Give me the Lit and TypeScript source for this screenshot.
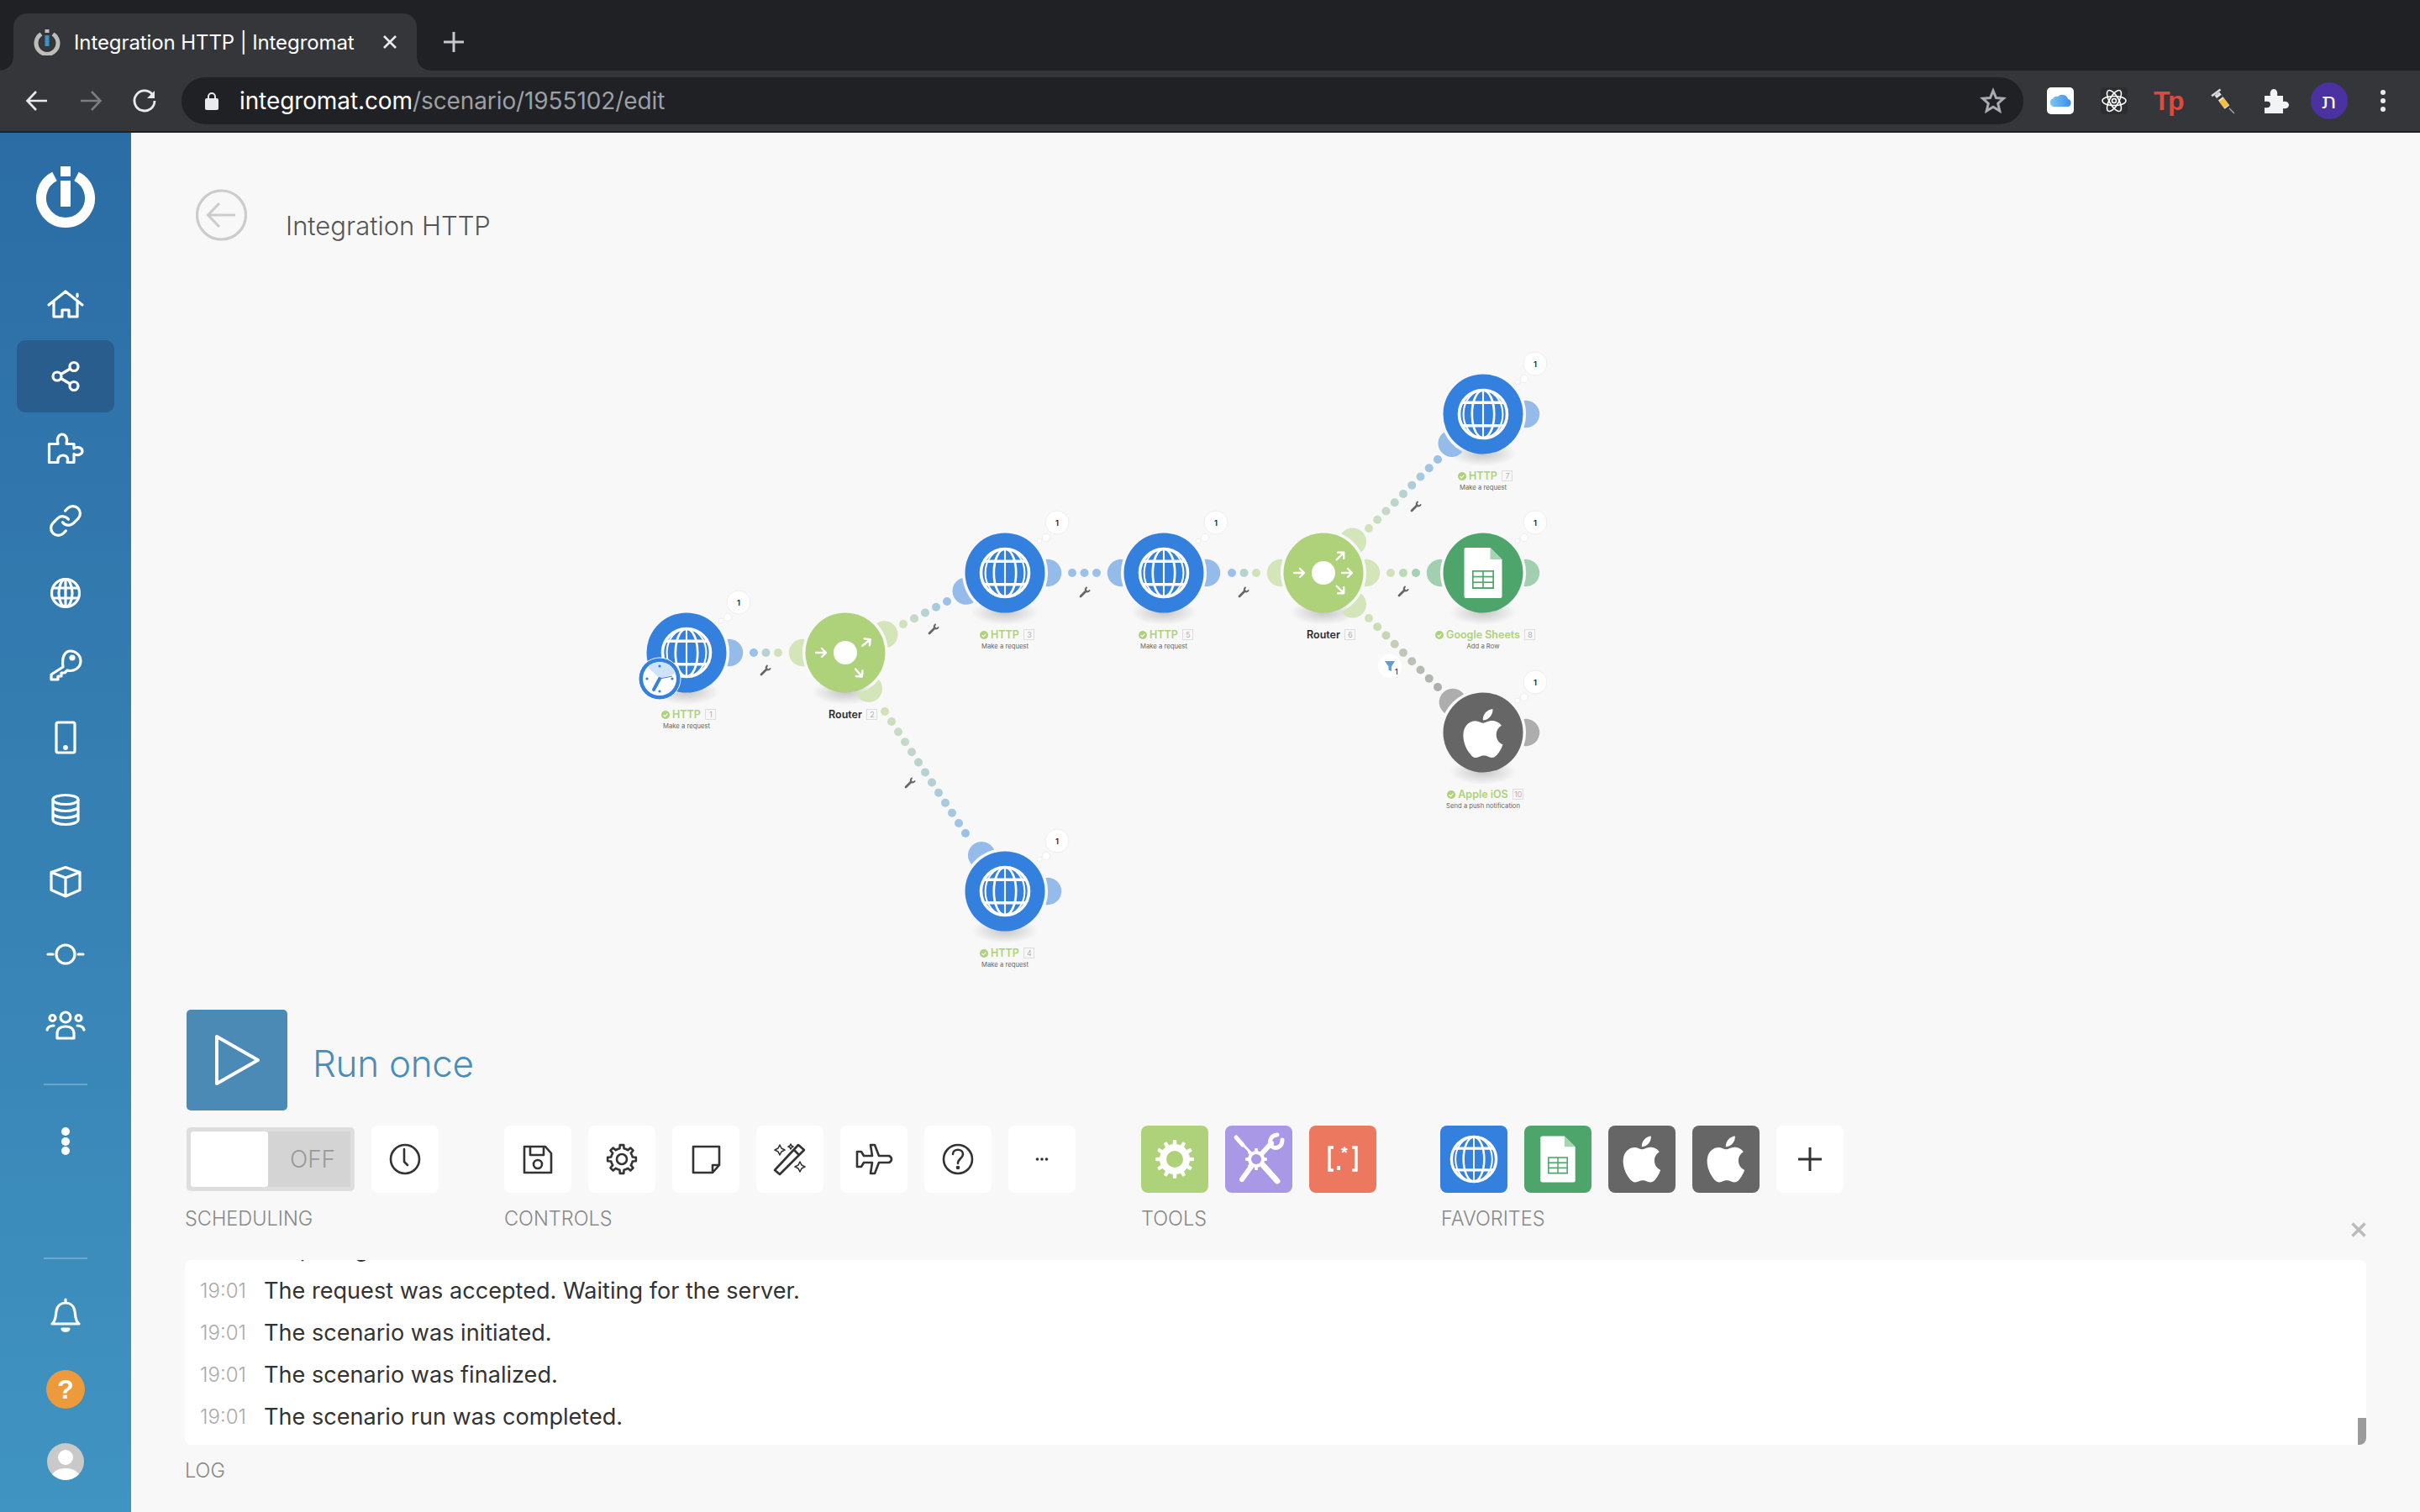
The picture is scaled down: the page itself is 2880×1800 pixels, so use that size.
import { LitElement, html, css, svg } from "lit";
import { customElement } from "lit/decorators.js";

const OX = 220;
const OY = 300;
const BLUE = "#3480df";
const GREEN = "#aed27a";
const SHEET = "#4da56b";
const GRAY = "#666666";
const APPLE = "M18.71 19.5c-.83 1.24-1.71 2.45-3.05 2.47-1.34.03-1.77-.79-3.29-.79-1.53 0-2 .77-3.27.82-1.31.05-2.3-1.32-3.14-2.53C4.25 17 2.94 12.45 4.7 9.39c.87-1.52 2.43-2.48 4.12-2.51 1.28-.02 2.5.87 3.29.87.78 0 2.26-1.07 3.81-.91.65.03 2.47.26 3.64 1.98-.09.06-2.17 1.28-2.15 3.81.03 3.02 2.65 4.03 2.68 4.04-.03.07-.42 1.44-1.38 2.83M13 3.5c.73-.83 1.94-1.46 2.94-1.5.13 1.17-.34 2.35-1.04 3.19-.69.85-1.83 1.51-2.95 1.42-.15-1.15.41-2.35 1.05-3.11z";

function hex(c: string) {
  return [1, 3, 5].map((i) => parseInt(c.slice(i, i + 2), 16));
}
function mix(a: string, b: string, t: number) {
  const p = hex(a), q = hex(b);
  return `rgb(${p.map((v, i) => Math.round(v + (q[i] - v) * t)).join(",")})`;
}
function gearPath(cx: number, cy: number, ro: number, ri: number, teeth: number) {
  const pts: string[] = [];
  const step = (Math.PI * 2) / teeth;
  for (let i = 0; i < teeth; i++) {
    const a = i * step;
    const seq: [number, number][] = [
      [ri, a - step * 0.5],
      [ri, a - step * 0.25],
      [ro, a - step * 0.17],
      [ro, a + step * 0.17],
      [ri, a + step * 0.25],
    ];
    for (const [r, t] of seq) pts.push(`${(cx + r * Math.cos(t)).toFixed(2)},${(cy + r * Math.sin(t)).toFixed(2)}`);
  }
  return "M" + pts.join("L") + "Z";
}
function globe(cx: number, cy: number, r: number) {
  const w = r * 0.1;
  return svg`<g fill="none" stroke="#fff" stroke-width=${w + 0.6}>
    <circle cx=${cx} cy=${cy} r=${r - w / 2}></circle>
    <ellipse cx=${cx} cy=${cy} rx=${r * 0.44} ry=${r - w / 2} stroke-width=${w * 0.9}></ellipse>
    <line x1=${cx} x2=${cx} y1=${cy - r} y2=${cy + r} stroke-width=${w * 0.7}></line>
    <ellipse cx=${cx} cy=${cy} rx=${r * 0.78} ry=${r - w / 2} stroke-width=${w * 0.7}></ellipse>
    <line x1=${cx - r * 0.86} x2=${cx + r * 0.86} y1=${cy - r * 0.46} y2=${cy - r * 0.46}></line>
    <line x1=${cx - r * 0.86} x2=${cx + r * 0.86} y1=${cy + r * 0.46} y2=${cy + r * 0.46}></line>
  </g>`;
}
function sheets(cx: number, cy: number, bg: string, sc = 1) {
  const w = 45 * sc, h = 60 * sc, x = cx - w / 2, y = cy - h / 2, f = 14 * sc;
  const tw = 26 * sc, th = 22 * sc, tx = cx - tw / 2, ty = y + 27 * sc;
  const cells = [];
  const cw = (tw - 5 * sc) / 2, ch = (th - 7 * sc) / 3;
  for (let r = 0; r < 3; r++) for (let c = 0; c < 2; c++)
    cells.push(svg`<rect x=${tx + 1.7 * sc + c * (cw + 1.6 * sc)} y=${ty + 1.7 * sc + r * (ch + 1.7 * sc)} width=${cw} height=${ch} fill="#fff"></rect>`);
  return svg`<path d="M${x + 2} ${y}H${x + w - f}L${x + w} ${y + f}V${y + h - 2}a2 2 0 0 1-2 2H${x + 2}a2 2 0 0 1-2-2V${y + 2}a2 2 0 0 1 2-2Z" fill="#fff"></path>
    <path d="M${x + w - f} ${y}L${x + w} ${y + f}H${x + w - f}Z" fill="#a5d3b4"></path>
    <rect x=${tx} y=${ty} width=${tw} height=${th} fill=${bg}></rect>${cells}`;
}
function apple(cx: number, cy: number, s: number) {
  return svg`<path transform="translate(${cx - 12 * s} ${cy - 12 * s}) scale(${s})" d=${APPLE} fill="#fff"></path>`;
}
function arrow(x: number, y: number, deg: number) {
  return svg`<g transform="translate(${x} ${y}) rotate(${deg})" fill="none" stroke="#fff" stroke-width="2.4" stroke-linecap="round" stroke-linejoin="round"><path d="M-6 0H6M1 -5L6 0L1 5"></path></g>`;
}
function wrench(x: number, y: number) {
  return svg`<g transform="translate(${x} ${y})" fill="none" stroke="#666" stroke-linecap="round"><path d="M-5 5L1.5 -1.5" stroke-width="2.8"></path><path d="M2 -5.5A3.6 3.6 0 0 0 1.5 -0.8A3.6 3.6 0 0 0 5.6 -2" stroke-width="1.9"></path></g>`;
}
function port(cx: number, cy: number, deg: number, color: string) {
  return svg`<path transform="translate(${cx} ${cy}) rotate(${deg})" d="M48.5 -16A16.2 16.2 0 1 1 48.5 16A51 51 0 0 0 48.5 -16Z" fill=${color}></path>`;
}

type N = { id: number; x: number; y: number; kind: string; name: string; sub: string; ports: [number, string][] };
const PB = "#94bbea", PG = "#d3e5b9", PS = "#a1cfb0", PA = "#adadad";
const nodes: N[] = [
  { id: 1, x: 817, y: 777, kind: "http", name: "HTTP", sub: "Make a request", ports: [[0, PB]] },
  { id: 2, x: 1006, y: 777, kind: "router2", name: "Router", sub: "", ports: [[180, PG], [-25, PG], [57, PG]] },
  { id: 3, x: 1196, y: 682, kind: "http", name: "HTTP", sub: "Make a request", ports: [[0, PB], [155, PB]] },
  { id: 4, x: 1196, y: 1061, kind: "http", name: "HTTP", sub: "Make a request", ports: [[0, PB], [237, PB]] },
  { id: 5, x: 1385, y: 682, kind: "http", name: "HTTP", sub: "Make a request", ports: [[0, PB], [180, PB]] },
  { id: 6, x: 1575, y: 682, kind: "router6", name: "Router", sub: "", ports: [[180, PG], [0, PG], [-47, PG], [47, PG]] },
  { id: 7, x: 1765, y: 493, kind: "http", name: "HTTP", sub: "Make a request", ports: [[0, PB], [137, PB]] },
  { id: 8, x: 1765, y: 682, kind: "sheets", name: "Google Sheets", sub: "Add a Row", ports: [[0, PS], [180, PS]] },
  { id: 10, x: 1765, y: 872, kind: "apple", name: "Apple iOS", sub: "Send a push notification", ports: [[0, PA], [225, PA]] },
];
const links: [number, number, number, number, number, string, string][] = [
  [897, 777, 926, 777, 3, "#9cc1e8", "#cfe2ba"],
  [1075, 743, 1127, 716, 5, "#cfe2ba", "#9cc1e8"],
  [1053, 847, 1149, 992, 13, "#cfe2ba", "#9cc1e8"],
  [1276, 682, 1305, 682, 3, "#9cc1e8", "#9cc1e8"],
  [1466, 682, 1495, 682, 3, "#9cc1e8", "#cfe2ba"],
  [1629, 629, 1711, 547, 9, "#cfe2ba", "#9cc1e8"],
  [1655, 682, 1685, 682, 3, "#cfe2ba", "#a6d2b1"],
  [1629, 736, 1711, 818, 9, "#cfe2ba", "#aeaeae"],
];
const wrenches = [[911, 798], [1111, 749], [1083, 932], [1291, 705], [1480, 705], [1685, 603], [1670, 704]];

function nodeBody(n: N) {
  const { x, y } = n;
  const bg = n.kind === "http" ? BLUE : n.kind === "sheets" ? SHEET : n.kind === "apple" ? GRAY : GREEN;
  const isRouter = n.kind === "router2" || n.kind === "router6";
  let icon: unknown = null;
  if (n.kind === "http") icon = globe(x, y, 30);
  if (n.kind === "sheets") icon = sheets(x, y, SHEET);
  if (n.kind === "apple") icon = apple(x, y + 1, 2.9);
  if (isRouter) {
    const a = [arrow(x - 29, y, 0), arrow(x + 25, y - 12, -38), arrow(x + 16, y + 24, 50)];
    if (n.kind === "router6") {
      a[1] = arrow(x + 20, y - 20, -45);
      a[2] = arrow(x + 20, y + 20, 45);
      a.push(arrow(x + 28, y, 0));
    }
    icon = svg`<circle cx=${x} cy=${y} r="14" fill="#fff"></circle>${a}`;
  }
  return svg`<ellipse cx=${x} cy=${y + 47} rx="40" ry="15" fill="url(#shade)"></ellipse>
    ${n.ports.map(([d, c]) => port(x, y, d, c))}
    <circle cx=${x} cy=${y} r="47.5" fill=${bg}></circle>${icon}
    ${isRouter ? null : svg`<circle cx=${x + 41} cy=${y - 38} r="3" fill="#fff" stroke="#eee"></circle>
    <circle cx=${x + 49} cy=${y - 42} r="4.7" fill="#fff" stroke="#eee"></circle>
    <circle cx=${x + 62} cy=${y - 60} r="14" fill="#fff" stroke="#eee"></circle>
    <text x=${x + 62} y=${y - 56.5} text-anchor="middle" class="cnt">1</text>`}`;
}

const sideIcons = [
  svg`<path d="M4 25L24 9L44 25M38 15V12M10 21V39H20V31H28V39H38V21"></path>`,
  svg`<circle cx="14" cy="24" r="5"></circle><circle cx="34" cy="12.5" r="5"></circle><circle cx="34" cy="35.5" r="5"></circle><path d="M18.5 21.5L29.5 15M18.5 26.5L29.5 33"></path>`,
  svg`<path d="M4.5 18.5H15C13 12 16 7 20 7S27 12 25 18.5H34V24C38 21 44 23 44 27S38 33 34 30.5V40.5H26C28 35 25 32 21 32S14 35 15 40.5H4.5Z"></path>`,
  svg`<g transform="translate(3 3) scale(1.75)" stroke-width="1.85"><path d="M10 13a5 5 0 0 0 7.54.54l3-3a5 5 0 0 0-7.07-7.07l-1.72 1.71"></path><path d="M14 11a5 5 0 0 0-7.54-.54l-3 3a5 5 0 0 0 7.07 7.07l1.71-1.71"></path></g>`,
  svg`<circle cx="24" cy="24" r="16.5"></circle><ellipse cx="24" cy="24" rx="8" ry="16.5"></ellipse><path d="M9 18H39M9 30H39M24 8V40"></path>`,
  svg`<path d="M21 26L7 35V41H15V37H19V33H23L26 30C34 32 42 27 42 19C42 12 36 7 30 7S19 13 21 26Z"></path><circle cx="32" cy="15" r="2" fill="#fff"></circle>`,
  svg`<rect x="13" y="6" width="22" height="36" rx="2"></rect><circle cx="24" cy="36" r="1.3" fill="#fff"></circle>`,
  svg`<ellipse cx="24" cy="12" rx="15" ry="5.5"></ellipse><path d="M9 12V36C9 39 16 41.5 24 41.5S39 39 39 36V12M9 20C9 23 16 25.5 24 25.5S39 23 39 20M9 28C9 31 16 33.5 24 33.5S39 31 39 28"></path>`,
  svg`<path d="M24 6.5L41 12.5V33.5L24 41L7 33.5V12.5ZM7 12.5L24 19L41 12.5M24 19V41"></path>`,
  svg`<circle cx="24" cy="24" r="11"></circle><path d="M3 24H9M39 24H45"></path>`,
  svg`<circle cx="24" cy="13" r="6"></circle><circle cx="8.5" cy="14" r="3.5"></circle><circle cx="39.5" cy="14" r="3.5"></circle><path d="M14 38V33C14 26 18 24 24 24S34 26 34 33V38ZM2 28C3 24 6 23 10 23M46 28C45 24 42 23 38 23"></path>`,
];
const ctl = [
  svg`<path d="M24 25H49L56 33V56H24ZM31 25V35H47V25"></path><circle cx="40" cy="46" r="5"></circle>`,
  svg`<path d=${gearPath(40, 40, 17, 13, 8)}></path><circle cx="40" cy="40" r="6"></circle>`,
  svg`<path d="M25 25H56V47L48 56H25ZM56 47H48V56"></path>`,
  svg`<path d="M28 58L22 53L50 23L57 29ZM45 29L51 35"></path><path d="M28 23L30 27L34 29L30 31L28 35L26 31L22 29L26 27ZM41 22L42 24L44 25L42 26L41 28L40 26L38 25L40 24ZM52 43L54 47L58 49L54 51L52 55L50 51L46 49L50 47Z" stroke-width="1.6"></path>`,
  svg`<path d="M36 23H41L46 36H58C62 38 62 42 58 44H46L41 57H36L38 44H28L25 49H20V31H25L28 36H38Z"></path>`,
  svg`<ellipse cx="40" cy="40" rx="17" ry="17"></ellipse><path d="M34 34C34 27 46 27 46 34C46 39 40 39 40 45"></path><circle cx="40" cy="50" r="1" fill="#333"></circle>`,
  svg`<circle cx="34.5" cy="40" r="1.8" fill="#333" stroke="none"></circle><circle cx="40" cy="40" r="1.8" fill="#333" stroke="none"></circle><circle cx="45.5" cy="40" r="1.8" fill="#333" stroke="none"></circle>`,
];

@customElement("app-root")
export class AppRoot extends LitElement {
  static styles = css`
    :host { display: block; width: 2880px; height: 1800px; overflow: hidden; font-family: Inter, "Liberation Sans", sans-serif; background: #f8f8f8; }
    .page { display: flex; flex-direction: column; height: 1800px; }
    .tabs { height: 84px; background: #202124; display: flex; align-items: flex-end; padding-left: 16px; flex: none; }
    .tab { position: relative; width: 480px; height: 68px; background: #35363a; border-radius: 16px 16px 0 0; display: flex; align-items: center; color: #fff; font-size: 24px; padding-left: 24px; box-sizing: border-box; }
    .tab::before, .tab::after { content: ""; position: absolute; bottom: 0; width: 16px; height: 16px; }
    .tab::before { left: -16px; background: radial-gradient(circle at 0 0, transparent 15.5px, #35363a 16px); }
    .tab::after { right: -16px; background: radial-gradient(circle at 100% 0, transparent 15.5px, #35363a 16px); }
    .tab .fav { width: 32px; height: 32px; margin-right: 16px; flex: none; }
    .tab .ttl { width: 366px; white-space: nowrap; letter-spacing: -0.1px; }
    .tab .cl { width: 20px; height: 20px; }
    .newtab { width: 28px; height: 28px; margin: 0 0 20px 30px; }
    .bar { height: 72px; background: #35363a; border-bottom: 2px solid #1f2023; display: flex; align-items: center; flex: none; padding-left: 12px; }
    .nav { width: 64px; height: 64px; display: flex; align-items: center; justify-content: center; flex: none; }
    .url { flex: 1; height: 56px; margin: 0 12px; background: #202124; border-radius: 28px; display: flex; align-items: center; padding: 0 20px 0 28px; font-size: 28px; color: #9aa0a6; }
    .url .lock { width: 16px; height: 24px; margin-right: 25px; }
    .url b { font-weight: 400; color: #fff; }
    .url .txt { flex: 1; letter-spacing: -0.1px; }
    .ext { width: 64px; height: 64px; display: flex; align-items: center; justify-content: center; flex: none; }
    .tp { font: 700 32px "Liberation Sans", sans-serif; color: #dd4b3e; letter-spacing: -2.5px; }
    .ava { width: 44px; height: 44px; border-radius: 50%; background: #4a32a0; color: #fff; font: 26px "DejaVu Sans", sans-serif; display: flex; align-items: center; justify-content: center; }
    .ext.last { margin-right: 12px; }
    .body { flex: 1; display: flex; min-height: 0; }
    .side { width: 156px; flex: none; background: linear-gradient(#2b6ca5, #4094c1); display: flex; flex-direction: column; align-items: center; color: #fff; }
    .logo { width: 76px; height: 76px; margin: 38px 0 47px; flex: none; }
    .si { width: 116px; height: 86px; flex: none; display: flex; align-items: center; justify-content: center; border-radius: 10px; }
    .si.on { background: #285d8e; }
    .si svg { width: 48px; height: 48px; fill: none; stroke: #fff; stroke-width: 3.2; stroke-linejoin: round; stroke-linecap: round; }
    .sep { width: 52px; height: 2px; background: rgba(255, 255, 255, 0.25); flex: none; }
    .sep.a { margin-top: 25px; }
    .dots { height: 205px; display: flex; flex-direction: column; gap: 1.5px; align-items: center; justify-content: flex-start; padding-top: 50px; box-sizing: border-box; flex: none; }
    .dots i { width: 10px; height: 10px; border-radius: 50%; background: #fff; }
    .bell { margin-top: 23px; }
    .help { width: 46px; height: 46px; border-radius: 50%; background: #ec9a3c; display: flex; align-items: center; justify-content: center; font: 700 32px "Liberation Sans", sans-serif; margin-top: 23px; flex: none; }
    .me { width: 44px; height: 44px; margin-top: 41px; flex: none; }
    .main { flex: 1; min-width: 0; display: flex; flex-direction: column; padding: 0 64px 35px 64px; }
    .head { height: 142px; flex: none; display: flex; padding: 67px 0 0 13px; box-sizing: border-box; align-items: flex-start; }
    .back { width: 61px; height: 62px; flex: none; }
    .title { margin: 24px 0 0 46px; font-size: 31px; line-height: 40px; font-weight: 300; color: #555; }
    .canvas { flex: 1; position: relative; min-height: 0; }
    .canvas > svg { position: absolute; inset: 0; width: 100%; height: 100%; overflow: visible; }
    .cnt { font: 600 9.5px Inter, sans-serif; fill: #222; }
    .fil { font: 500 9px Inter, sans-serif; fill: #333; }
    .lab { position: absolute; transform: translateX(-50%); text-align: center; white-space: nowrap; }
    .nm { position: relative; display: inline-block; font-size: 12.5px; line-height: 16px; font-weight: 600; color: #aed27a; }
    .nm.r { color: #2d2d2d; }
    .nm svg { position: absolute; right: 100%; top: 3px; margin-right: 3.5px; width: 10px; height: 10px; }
    .nm span { position: absolute; left: 100%; top: 1px; margin-left: 5.5px; width: 13px; height: 13px; box-sizing: border-box; border: 1px solid #ddd; font-size: 9px; line-height: 11px; font-weight: 300; color: #999; }
    .sb { font-size: 7.7px; line-height: 12px; color: #666; }
    .run { height: 120px; flex: none; display: flex; align-items: center; padding-left: 2px; }
    .runb { width: 120px; height: 120px; border-radius: 5px; background: #4a8ab5; flex: none; }
    .runb svg { display: block; }
    .runt { margin: 8px 0 0 30px; font-size: 44px; font-weight: 300; color: #4a8db8; letter-spacing: -0.3px; }
    .tools { margin-top: 18px; height: 133px; flex: none; display: grid; grid-template-columns: 380px 758px 356px 480px 1fr; }
    .g { display: flex; flex-direction: column; }
    .row { display: flex; gap: 20px; height: 80px; align-items: center; }
    .lbl { margin-top: 17px; font-size: 23.5px; line-height: 28px; font-weight: 300; color: #888; }
    .lbl.fv { margin-left: 1px; }
    .lbl.lg { margin-top: 17px; }
    .tile { width: 80px; height: 80px; border-radius: 8px; background: #fff; flex: none; }
    .tile svg { display: block; width: 80px; height: 80px; }
    .ol { fill: none; stroke: #333; stroke-width: 2.6; stroke-linejoin: round; stroke-linecap: round; }
    .tog { width: 200px; height: 76px; margin-left: 2px; box-sizing: border-box; border: 5px solid #dedede; border-radius: 5px; background: #d4d4d4; display: flex; align-items: center; }
    .tog i { width: 92px; height: 66px; background: #fff; border-radius: 3px; flex: none; }
    .tog span { flex: 1; text-align: center; font-size: 28px; font-weight: 300; color: #999; padding-left: 8px; }
    .x { justify-self: end; align-self: end; width: 18px; height: 18px; }
    .log { height: 220px; flex: none; margin-top: 27px; border-radius: 8px; background: #fff; display: flex; flex-direction: column; justify-content: flex-end; overflow: hidden; position: relative; padding-bottom: 9px; box-sizing: border-box; }
    .lr { height: 50px; flex: none; display: flex; align-items: center; color: #333; font-size: 27.1px; font-weight: 400; }
    .lr em { font-style: normal; width: 76px; margin-left: 18px; flex: none; color: #aaa; font-size: 24px; font-weight: 300; }
    .sc { position: absolute; right: 0; bottom: 0; width: 10px; height: 32px; background: #9b9b9b; }
    .green { background: #aed27a; } .purple { background: #a998e5; } .red { background: #ec7860; } .blue { background: #3480df; } .sheet { background: #4da56b; } .dark { background: #666; }
    .ast { font: 700 20px "Liberation Sans", sans-serif; fill: #fff; }
  `;

  render() {
    return html`<div class="page">
      <div class="tabs">
        <div class="tab">
          <svg class="fav" viewBox="0 0 32 32"><path d="M9 6.5A13 13 0 1 0 23 6.5" fill="none" stroke="#bdbdbd" stroke-width="5"></path><rect x="13.5" y="1" width="5" height="4" fill="#bdbdbd"></rect><rect x="13.5" y="8" width="5" height="13" fill="#3f8fc6"></rect></svg>
          <span class="ttl">Integration HTTP | Integromat</span>
          <svg class="cl" viewBox="0 0 20 20"><path d="M3 3L17 17M17 3L3 17" stroke="#e8eaed" stroke-width="2.6"></path></svg>
        </div>
        <svg class="newtab" viewBox="0 0 28 28"><path d="M14 2V26M2 14H26" stroke="#c4c7cc" stroke-width="3"></path></svg>
      </div>
      <div class="bar">
        <div class="nav"><svg width="30" height="30" viewBox="0 0 30 30" fill="none" stroke="#e8eaed" stroke-width="2.6"><path d="M27 15H4M14 4L3.5 15L14 26"></path></svg></div>
        <div class="nav"><svg width="30" height="30" viewBox="0 0 30 30" fill="none" stroke="#7b7d80" stroke-width="2.6"><path d="M3 15H26M16 4L26.5 15L16 26"></path></svg></div>
        <div class="nav"><svg width="30" height="30" viewBox="0 0 30 30" fill="none" stroke="#e8eaed" stroke-width="2.8"><path d="M24 7A12 12 0 1 0 27 15"></path><path d="M18 12H27V3" fill="#e8eaed" stroke="none"></path></svg></div>
        <div class="url">
          <svg class="lock" viewBox="0 0 16 24"><path d="M4 10V7A4 4 0 0 1 12 7V10" fill="none" stroke="#e8eaed" stroke-width="2"></path><rect y="9" width="16" height="14" rx="2" fill="#e8eaed"></rect></svg>
          <span class="txt"><b>integromat.com</b>/scenario/1955102/edit</span>
          <svg width="32" height="32" viewBox="0 0 32 32"><path d="M16 4L19.5 12.5L28.5 13.2L21.7 19.2L23.8 28L16 23.3L8.2 28L10.3 19.2L3.5 13.2L12.5 12.5Z" fill="none" stroke="#a8abaf" stroke-width="3" stroke-linejoin="miter"></path></svg>
        </div>
        <div class="ext"><svg width="32" height="32" viewBox="0 0 32 32"><defs><linearGradient id="ic" x1="0" y1="0" x2="1" y2="0"><stop offset="0" stop-color="#7cc8f0"></stop><stop offset="1" stop-color="#3a8ff0"></stop></linearGradient></defs><rect width="32" height="32" rx="5" fill="#fff"></rect><path d="M8 23A5 5 0 0 1 7 13.4A5 5 0 0 1 13 11A7 7 0 0 1 25 14A4.6 4.6 0 0 1 25 23Z" fill="url(#ic)"></path></svg></div>
        <div class="ext"><svg width="32" height="32" viewBox="0 0 32 32"><rect width="32" height="32" rx="4" fill="#2d2e32"></rect><g fill="none" stroke="#fff" stroke-width="1.6"><ellipse cx="16" cy="16" rx="14" ry="5.5"></ellipse><ellipse cx="16" cy="16" rx="14" ry="5.5" transform="rotate(60 16 16)"></ellipse><ellipse cx="16" cy="16" rx="14" ry="5.5" transform="rotate(120 16 16)"></ellipse><circle cx="16" cy="16" r="2.5"></circle></g></svg></div>
        <div class="ext"><span class="tp">Tp</span></div>
        <div class="ext"><svg width="32" height="32" viewBox="0 0 32 32"><path d="M25 25L31 31" stroke="#aaa" stroke-width="1.2"></path><g transform="rotate(-37 16 16)"><rect x="13" y="6" width="7" height="20" fill="#e6e6e6"></rect><rect x="13" y="15" width="7" height="10" fill="#f0c040"></rect><rect x="13" y="10" width="7" height="3" fill="#333"></rect><rect x="10" y="3" width="13" height="2.5" fill="#ddd"></rect><rect x="15" y="4" width="3" height="4" fill="#ccc"></rect></g></svg></div>
        <div class="ext"><svg width="32" height="32" viewBox="0 0 32 32"><path d="M3 10H10C9 5 11 2 14 2S19 5 18 10H25V17C29 16 32 18 32 21S29 26 25 25V31H3V24C8 25 10 23 10 20S7 16 3 17Z" fill="#f1f3f4"></path></svg></div>
        <div class="ext"><div class="ava">ת</div></div>
        <div class="ext last"><svg width="8" height="28" viewBox="0 0 8 28"><circle cx="4" cy="4" r="3" fill="#e8eaed"></circle><circle cx="4" cy="14" r="3" fill="#e8eaed"></circle><circle cx="4" cy="24" r="3" fill="#e8eaed"></circle></svg></div>
      </div>
      <div class="body">
        <nav class="side">
          <svg class="logo" viewBox="0 0 76 76"><path d="M25 14A29 29 0 1 0 51 14" fill="none" stroke="#fff" stroke-width="12"></path><rect x="32" y="2" width="12" height="12" fill="#fff"></rect><rect x="32" y="19" width="12" height="31" fill="#fff"></rect></svg>
          ${sideIcons.map((ic, i) => html`<div class="si ${i === 1 ? "on" : ""}"><svg viewBox="0 0 48 48">${ic}</svg></div>`)}
          <div class="sep a"></div>
          <div class="dots"><i></i><i></i><i></i></div>
          <div class="sep"></div>
          <div class="si bell"><svg viewBox="0 0 48 48"><path d="M8 35C13 31 12 25 13 20C14 13 19 10 24 10S34 13 35 20C36 25 35 31 40 35ZM24 6V10"></path><path d="M20 41H28C27 44 21 44 20 41Z" fill="#fff"></path></svg></div>
          <div class="help">?</div>
          <svg class="me" viewBox="0 0 44 44"><defs><clipPath id="av"><circle cx="22" cy="22" r="22"></circle></clipPath></defs><circle cx="22" cy="22" r="22" fill="#c9c9c9"></circle><g clip-path="url(#av)" fill="#fff"><circle cx="22" cy="17" r="9"></circle><ellipse cx="22" cy="41" rx="17" ry="11"></ellipse></g></svg>
        </nav>
        <main class="main">
          <div class="head">
            <svg class="back" viewBox="0 0 61 62" fill="none" stroke="#cccccc" stroke-width="3.2"><circle cx="30.5" cy="31" r="29"></circle><path d="M47 31H15M28 17L14.5 31L28 45"></path></svg>
            <div class="title">Integration HTTP</div>
          </div>
          <section class="canvas">
            <svg>
              <defs><radialGradient id="shade"><stop offset="0" stop-color="#000" stop-opacity=".2"></stop><stop offset="1" stop-color="#000" stop-opacity="0"></stop></radialGradient></defs>
              <g transform="translate(${-OX} ${-OY})">
                ${links.map(([x1, y1, x2, y2, n, c1, c2]) =>
                  Array.from({ length: n }, (_, i) => {
                    const t = i / (n - 1);
                    return svg`<circle cx=${x1 + (x2 - x1) * t} cy=${y1 + (y2 - y1) * t} r="5" fill=${mix(c1, c2, t)}></circle>`;
                  }))}
                ${wrenches.map(([x, y]) => wrench(x, y))}
                ${nodes.map(nodeBody)}
                <g transform="translate(785 808)">
                  <circle r="25" fill="#3480df" stroke="#f4f8fd" stroke-width="1"></circle>
                  <circle r="20" fill="#fff"></circle>
                  <path d="M0 0L-14 -14A20 20 0 0 1 19 -6Z" fill="#cfe3f8"></path>
                  <path d="M0 0L15 -3" stroke="#3480df" stroke-width="1"></path>
                  <path d="M0 0L-7 13" stroke="#3480df" stroke-width="4" stroke-linecap="round"></path>
                  <g fill="#3480df"><circle cy="-15" r="1.6"></circle><circle cy="15" r="1.6"></circle><circle cx="-15" r="1.6"></circle><circle cx="15" r="1.6"></circle></g>
                </g>
                <circle cx="1654" cy="793" r="14" fill="#fff"></circle>
                <path d="M1648 787H1660L1656 793.5V799L1652.5 797.5V793.5Z" fill="#5aa0dc"></path>
                <text x="1660" y="803" class="fil">1</text>
              </g>
            </svg>
            ${nodes.map((n) => html`<div class="lab" style="left:${n.x - OX}px;top:${n.y + 62 - OY}px">
              <div class="nm ${n.name === "Router" ? "r" : ""}">
                ${n.name === "Router" ? "" : html`<svg viewBox="0 0 10 10"><circle cx="5" cy="5" r="5" fill="#aed27a"></circle><path d="M2.6 5.2L4.4 6.9L7.4 3.6" fill="none" stroke="#fff" stroke-width="1.2"></path></svg>`}
                ${n.name}<span>${n.id}</span>
              </div>
              ${n.sub ? html`<div class="sb">${n.sub}</div>` : ""}
            </div>`)}
          </section>
          <div class="run">
            <div class="runb"><svg width="120" height="120" viewBox="0 0 120 120" fill="none" stroke="#fff" stroke-width="4" stroke-linejoin="round"><path d="M36 32V88L85 60Z"></path></svg></div>
            <div class="runt">Run once</div>
          </div>
          <div class="tools">
            <div class="g">
              <div class="row">
                <div class="tog"><i></i><span>OFF</span></div>
                <div class="tile"><svg viewBox="0 0 80 80" class="ol"><circle cx="40" cy="40" r="17"></circle><path d="M39 28V43L43 47"></path></svg></div>
              </div>
              <div class="lbl">SCHEDULING</div>
            </div>
            <div class="g">
              <div class="row">${ctl.map((c) => html`<div class="tile"><svg viewBox="0 0 80 80" class="ol">${c}</svg></div>`)}</div>
              <div class="lbl">CONTROLS</div>
            </div>
            <div class="g">
              <div class="row">
                <div class="tile green"><svg viewBox="0 0 80 80"><path d=${gearPath(40, 40, 23, 18, 12)} fill="#fff"></path><circle cx="40" cy="40" r="10" fill="#aed27a"></circle></svg></div>
                <div class="tile purple"><svg viewBox="0 0 80 80"><g stroke="#fff" fill="none" stroke-linecap="round"><path d="M14 15L34 36" stroke-width="3"></path><path d="M13 14L21 23" stroke-width="5"></path><path d="M45 47L62 66" stroke-width="7"></path><path d="M20 64L33 46" stroke-width="6"></path><path d="M44 33L55 21" stroke-width="6"></path><path d="M62 11C52 12 52 22 56 25C60 28 68 26 68 17" stroke-width="5"></path></g><path d=${gearPath(37, 40, 13, 10, 8)} fill="#fff"></path><circle cx="37" cy="40" r="6" fill="#a998e5"></circle></svg></div>
                <div class="tile red"><svg viewBox="0 0 80 80"><path d="M29 26H24V53H29M51 26H56V53H51" fill="none" stroke="#fff" stroke-width="3.4"></path><rect x="33" y="48" width="4" height="5" fill="#fff"></rect><text x="42" y="39" text-anchor="middle" class="ast">*</text></svg></div>
              </div>
              <div class="lbl">TOOLS</div>
            </div>
            <div class="g">
              <div class="row">
                <div class="tile blue"><svg viewBox="0 0 80 80">${globe(40, 40, 28)}</svg></div>
                <div class="tile sheet"><svg viewBox="0 0 80 80">${sheets(40, 40, SHEET, 0.92)}</svg></div>
                <div class="tile dark"><svg viewBox="0 0 80 80">${apple(40, 40, 2.75)}</svg></div>
                <div class="tile dark"><svg viewBox="0 0 80 80">${apple(40, 40, 2.75)}</svg></div>
                <div class="tile"><svg viewBox="0 0 80 80"><path d="M40 26V54M26 40H54" stroke="#333" stroke-width="3"></path></svg></div>
              </div>
              <div class="lbl fv">FAVORITES</div>
            </div>
            <svg class="x" viewBox="0 0 18 18"><path d="M1.5 1.5L16.5 16.5M16.5 1.5L1.5 16.5" stroke="#bbb" stroke-width="3.6"></path></svg>
          </div>
          <div class="log">
            <div class="lr"><em>19:01</em>Preparing</div>
            <div class="lr"><em>19:01</em>The request was accepted. Waiting for the server.</div>
            <div class="lr"><em>19:01</em>The scenario was initiated.</div>
            <div class="lr"><em>19:01</em>The scenario was finalized.</div>
            <div class="lr"><em>19:01</em>The scenario run was completed.</div>
            <div class="sc"></div>
          </div>
          <div class="lbl lg">LOG</div>
        </main>
      </div>
    </div>`;
  }
}
